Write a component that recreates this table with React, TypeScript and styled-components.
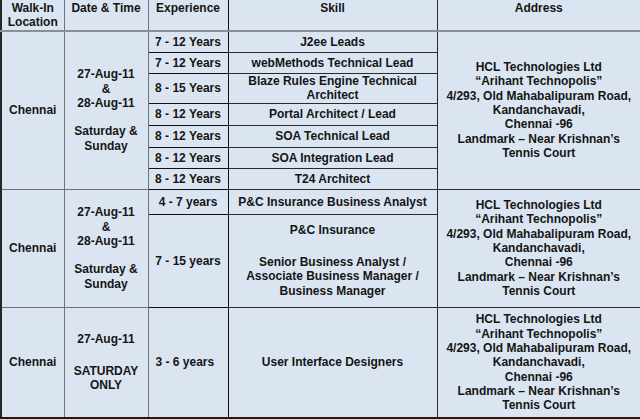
import React from "react";
import styled, { createGlobalStyle } from "styled-components";

const GlobalStyle = createGlobalStyle`
  html, body {
    margin: 0;
    padding: 0;
    background: #ffffff;
  }
  body {
    width: 640px;
    height: 419px;
    overflow: hidden;
  }
`;

const Table = styled.table`
  width: 640px;
  table-layout: fixed;
  border-collapse: collapse;
  background: #dbe5f1;
  font-family: "Liberation Sans", Arial, sans-serif;
  font-weight: bold;
  font-size: 12px;
  line-height: 14.3px;
  color: #151515;
  border-left: 2px solid #262626;
  border-right: 2px solid #262626;
  border-bottom: 2px solid #1a1a1a;
`;

const HeadRow = styled.tr`
  height: 30px;
`;

const BodyRow = styled.tr<{ $h: number }>`
  height: ${(p) => p.$h}px;
`;

const HeadCell = styled.th<{ $line: string }>`
  padding: 1px 2px 0;
  vertical-align: top;
  text-align: center;
  font-weight: bold;
  border-top: none;
  border-bottom: 2px solid #8a8f96;
  border-left: 1px solid ${(p) => p.$line};
  border-right: 1px solid ${(p) => p.$line};
`;

const Cell = styled.td<{ $align?: "center" | "left"; $line: string }>`
  padding: 0 ${(p) => (p.$align === "left" ? "0 0 7px" : "2px")};
  padding-left: ${(p) => (p.$align === "left" ? "7px" : "2px")};
  vertical-align: middle;
  text-align: ${(p) => p.$align ?? "center"};
  border: 1px solid ${(p) => p.$line};
  overflow: hidden;
`;

const Line = styled.span`
  display: block;
  white-space: nowrap;
`;

const Gap = styled.span<{ $h: number }>`
  display: block;
  height: ${(p) => p.$h}px;
`;

type Piece = string | { gap: number };

type SubRow = { exp: string; skill: Piece[]; h: number; expAlign?: "center" | "left" };

type Section = {
  dates: Piece[];
  rows: SubRow[];
};

const GRAY = "#6f7378";
const DARK = "#2a2a2a";
const BLACK = "#111111";

const ADDRESS: Piece[] = [
  "HCL Technologies Ltd",
  "\u201CArihant Technopolis\u201D",
  "4/293, Old Mahabalipuram Road,",
  "Kandanchavadi,",
  "Chennai -96",
  "Landmark \u2013 Near Krishnan\u2019s",
  "Tennis Court",
];

const sections: Section[] = [
  {
    dates: ["27-Aug-11", "&", "28-Aug-11", { gap: 14.3 }, "Saturday &", "Sunday"],
    rows: [
      { exp: "7 - 12 Years", skill: ["J2ee Leads"], h: 22 },
      { exp: "7 - 12 Years", skill: ["webMethods Technical Lead"], h: 21 },
      { exp: "8 - 15 Years", skill: ["Blaze Rules Engine Technical", "Architect"], h: 29 },
      { exp: "8 - 12 Years", skill: ["Portal Architect / Lead"], h: 22 },
      { exp: "8 - 12 Years", skill: ["SOA Technical Lead"], h: 22 },
      { exp: "8 - 12 Years", skill: ["SOA Integration Lead"], h: 21 },
      { exp: "8 - 12 Years", skill: ["T24 Architect"], h: 21 },
    ],
  },
  {
    dates: ["27-Aug-11", "&", "28-Aug-11", { gap: 14.3 }, "Saturday &", "Sunday"],
    rows: [
      { exp: "4 - 7 years", skill: ["P&C Insurance Business Analyst"], h: 25 },
      {
        exp: "7 - 15 years",
        skill: [
          "P&C Insurance",
          { gap: 17.4 },
          "Senior Business Analyst /",
          "Associate Business Manager /",
          "Business Manager",
        ],
        h: 93,
      },
    ],
  },
  {
    dates: ["27-Aug-11", { gap: 17.4 }, "SATURDAY", "ONLY"],
    rows: [
      { exp: "3 - 6 years", skill: ["User Interface Designers"], h: 111, expAlign: "left" },
    ],
  },
];

const Lines: React.FC<{ items: Piece[] }> = ({ items }) => (
  <>
    {items.map((it, i) =>
      typeof it === "string" ? <Line key={i}>{it}</Line> : <Gap key={i} $h={it.gap} />
    )}
  </>
);

export default function App() {
  return (
    <>
      <GlobalStyle />
      <Table>
        <colgroup>
          <col style={{ width: 63 }} />
          <col style={{ width: 84 }} />
          <col style={{ width: 80 }} />
          <col style={{ width: 209 }} />
          <col style={{ width: 204 }} />
        </colgroup>
        <thead>
          <HeadRow>
            <HeadCell $line={GRAY}>
              <Line>Walk-In</Line>
              <Line>Location</Line>
            </HeadCell>
            <HeadCell $line={GRAY}>Date &amp; Time</HeadCell>
            <HeadCell $line={BLACK}>Experience</HeadCell>
            <HeadCell $line={DARK}>Skill</HeadCell>
            <HeadCell $line={DARK}>Address</HeadCell>
          </HeadRow>
        </thead>
        <tbody>
          {sections.map((sec, si) =>
            sec.rows.map((row, ri) => (
              <BodyRow key={`${si}-${ri}`} $h={row.h}>
                {ri === 0 && (
                  <>
                    <Cell rowSpan={sec.rows.length} $line={GRAY}>
                      Chennai
                    </Cell>
                    <Cell rowSpan={sec.rows.length} $line={GRAY}>
                      <Lines items={sec.dates} />
                    </Cell>
                  </>
                )}
                <Cell $line={BLACK} $align={row.expAlign}>
                  {row.exp}
                </Cell>
                <Cell $line={DARK}>
                  <Lines items={row.skill} />
                </Cell>
                {ri === 0 && (
                  <Cell rowSpan={sec.rows.length} $line={DARK}>
                    <Lines items={ADDRESS} />
                  </Cell>
                )}
              </BodyRow>
            ))
          )}
        </tbody>
      </Table>
    </>
  );
}
